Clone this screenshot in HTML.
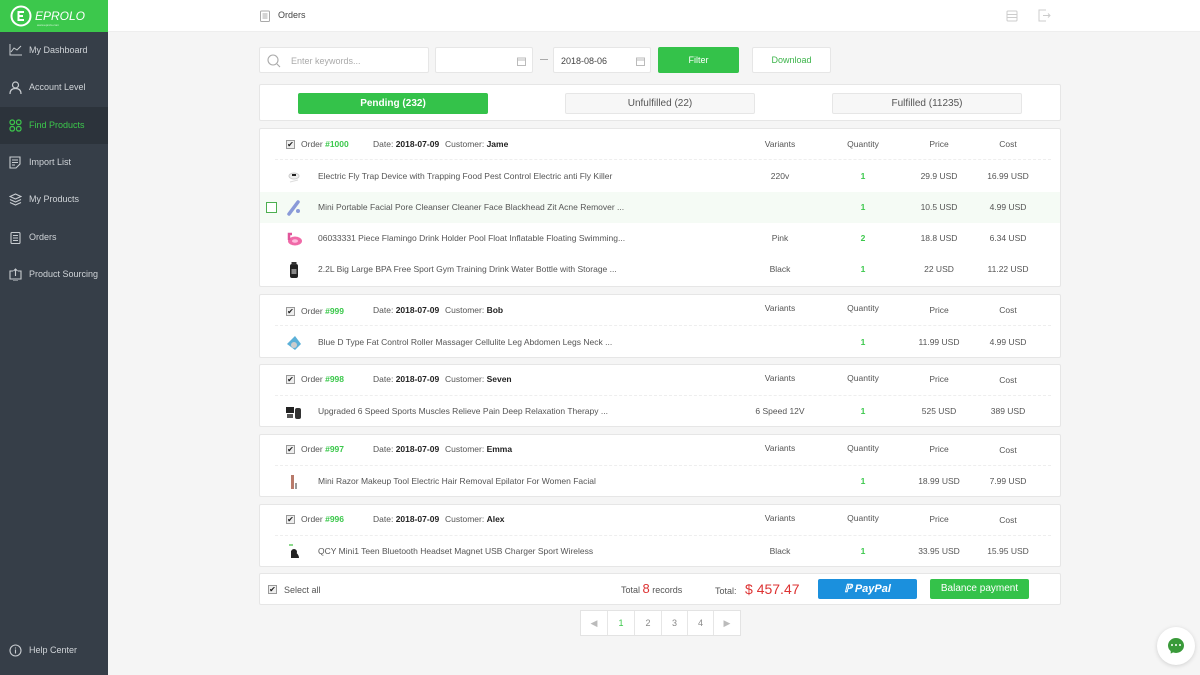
<!DOCTYPE html>
<html><head><meta charset="utf-8"><style>
*{box-sizing:border-box;margin:0;padding:0}
body{width:1200px;height:675px;overflow:hidden;background:#f5f5f5;font-family:"Liberation Sans",Arial,sans-serif;font-size:9px;color:#555;position:relative}
.abs{position:absolute}
#side{position:absolute;left:0;top:0;width:108px;height:675px;background:#363e48}
#logo{position:absolute;left:0;top:0;width:108px;height:32px;background:#3cc84c;color:#fff}
.nav{position:absolute;left:0;width:108px;height:37px;color:#d0d4d8;font-size:9px;line-height:37px;padding-left:29px}
.nav svg{position:absolute;left:9px;top:12px}
.nav.act{background:#2c333b;color:#3cc84c}
#top{position:absolute;left:108px;top:0;right:0;height:32px;background:#fff;border-bottom:1px solid #eee}
.box{position:absolute;background:#fff;border:1px solid #e6e6e6;border-radius:2px}
.btn{position:absolute;border-radius:2px;text-align:center;font-size:9px}
.blk{position:absolute;left:259px;width:802px;background:#fff;border:1px solid #e6e6e6;border-radius:2px}
.r{position:absolute;left:0;width:800px;height:31px;line-height:31px;font-size:8.5px}
.hd{border-bottom:1px dashed #eee}
.cb{position:absolute;width:9px;height:9px;border:1px solid #999;background:#eee;top:11px;left:26px;font-size:8px;line-height:7px;text-align:center;color:#222}
.c{position:absolute;text-align:center;width:80px}
.v{left:480px}.q{left:563px}.p{left:639px}.co{left:708px}
.g{color:#3cc84c;font-weight:bold}
.b{color:#222;font-weight:bold}
.t{position:absolute;left:58px;color:#555}
.th{position:absolute;left:25px;top:7px;width:18px;height:18px}
</style></head><body>
<div id="side">
<div id="logo">
<svg class="abs" style="left:10px;top:5px" width="22" height="22" viewBox="0 0 22 22"><circle cx="11" cy="11" r="9.5" fill="none" stroke="#fff" stroke-width="2"/><path d="M14 7H8.5v8H14M8.5 11H13" fill="none" stroke="#fff" stroke-width="2"/></svg>
<div class="abs" style="left:35px;top:9px;font-size:12px;font-style:italic">EPROLO</div>
<div class="abs" style="left:37px;top:23px;font-size:3px;opacity:.8">www.eprolo.com</div>
</div>
<div class="nav" style="top:32px"><svg width="13" height="12" viewBox="0 0 13 12" fill="none" stroke="#c8ccd0" stroke-width="1"><path d="M1 0v11h12M2 8l3-4 3 2 4-4"/></svg>My Dashboard</div>
<div class="nav" style="top:69px"><svg width="13" height="13" viewBox="0 0 13 13" fill="none" stroke="#c8ccd0" stroke-width="1.2"><circle cx="6.5" cy="4" r="3"/><path d="M1 13c0-4 2.5-5.5 5.5-5.5S12 9 12 13"/></svg>Account Level</div>
<div class="nav act" style="top:107px"><svg width="13" height="13" viewBox="0 0 13 13" fill="none" stroke="#3cc84c" stroke-width="1.2"><rect x="1" y="1" width="4.5" height="4.5" rx="2"/><rect x="7.5" y="1" width="4.5" height="4.5" rx="2"/><rect x="1" y="7.5" width="4.5" height="4.5" rx="2"/><rect x="7.5" y="7.5" width="4.5" height="4.5" rx="2"/></svg>Find Products</div>
<div class="nav" style="top:144px"><svg width="13" height="13" viewBox="0 0 13 13" fill="none" stroke="#c8ccd0" stroke-width="1.1"><path d="M1 1h10v7l-4 4H1zM3 4h6M3 6.5h6M3 9h3"/></svg>Import List</div>
<div class="nav" style="top:181px"><svg width="13" height="13" viewBox="0 0 13 13" fill="none" stroke="#c8ccd0" stroke-width="1.1"><path d="M6.5 1L12 3.5 6.5 6 1 3.5zM1 6.5L6.5 9 12 6.5M1 9.5L6.5 12 12 9.5"/></svg>My Products</div>
<div class="nav" style="top:219px"><svg width="13" height="13" viewBox="0 0 13 13" fill="none" stroke="#c8ccd0" stroke-width="1.1"><rect x="2" y="1.5" width="9" height="11" rx="1"/><path d="M4 4.5h5M4 7h5M4 9.5h5"/></svg>Orders</div>
<div class="nav" style="top:256px"><svg width="13" height="13" viewBox="0 0 13 13" fill="none" stroke="#c8ccd0" stroke-width="1.1"><path d="M4 3H1v8h11V3H9M6.5 8V1M4.5 3l2-2 2 2M4 13h5"/></svg>Product Sourcing</div>
<div class="nav" style="top:632px"><svg width="13" height="13" viewBox="0 0 13 13" fill="none" stroke="#c8ccd0" stroke-width="1.1"><circle cx="6.5" cy="6.5" r="5.5"/><path d="M6.5 5.5v4M6.5 3.5v1"/></svg>Help Center</div>
</div>
<div id="top">
<svg class="abs" style="left:152px;top:10px" width="10" height="12" viewBox="0 0 10 12" fill="none" stroke="#aaa" stroke-width="1"><rect x="0.5" y="1" width="9" height="10.5" rx="1"/><path d="M2.5 4h5M2.5 6h5M2.5 8h5"/></svg>
<div class="abs" style="left:170px;top:10px;font-size:9px;color:#444">Orders</div>
<svg class="abs" style="left:898px;top:10px" width="12" height="12" viewBox="0 0 12 12" fill="none" stroke="#ccc"><rect x="1" y="1" width="10" height="10" rx="1"/><path d="M1 4.5h10M1 7.5h10"/></svg>
<svg class="abs" style="left:930px;top:9px" width="13" height="13" viewBox="0 0 13 13" fill="none" stroke="#ccc"><path d="M8 1H1v11h7M5 6.5h7M10 4.5l2 2-2 2"/></svg>
</div>
<div class="box" style="left:259px;top:47px;width:170px;height:26px">
<svg class="abs" style="left:7px;top:6px" width="14" height="14" viewBox="0 0 14 14" fill="none" stroke="#aaa" stroke-width="1.1"><circle cx="6" cy="6" r="5"/><path d="M10 10l3 3"/></svg>
<div class="abs" style="left:31px;top:8px;color:#aaa">Enter keywords...</div></div>
<div class="box" style="left:435px;top:47px;width:98px;height:26px"><svg class="abs" style="left:81px;top:9px" width="9" height="9" viewBox="0 0 9 9" fill="none" stroke="#bbb"><rect x=".5" y="1" width="8" height="7.5"/><path d="M.5 3h8"/></svg></div>
<div class="abs" style="left:540px;top:59px;width:8px;height:1px;background:#aaa"></div>
<div class="box" style="left:553px;top:47px;width:98px;height:26px"><div class="abs" style="left:7px;top:8px;color:#444">2018-08-06</div><svg class="abs" style="left:82px;top:9px" width="9" height="9" viewBox="0 0 9 9" fill="none" stroke="#bbb"><rect x=".5" y="1" width="8" height="7.5"/><path d="M.5 3h8"/></svg></div>
<div class="btn" style="left:658px;top:47px;width:81px;height:26px;line-height:26px;background:#34c24a;color:#fff">Filter</div>
<div class="btn" style="left:752px;top:47px;width:79px;height:26px;line-height:24px;background:#fff;border:1px solid #e6e6e6;color:#3cb44a">Download</div>
<div class="box" style="left:259px;top:84px;width:802px;height:37px">
<div class="btn" style="left:38px;top:8px;width:190px;height:21px;line-height:21px;background:#34c24a;color:#fff;font-weight:bold;font-size:10px">Pending (232)</div>
<div class="btn" style="left:305px;top:8px;width:190px;height:21px;line-height:19px;background:#f7f7f7;border:1px solid #e6e6e6;color:#555;font-size:10px">Unfulfilled (22)</div>
<div class="btn" style="left:572px;top:8px;width:190px;height:21px;line-height:19px;background:#f7f7f7;border:1px solid #e6e6e6;color:#555;font-size:10px">Fulfilled (11235)</div>
</div>

<div class="blk" style="top:128px;height:159px">
<div class="r hd" style="top:0;left:15px;width:776px"><div class="cb" style="left:11px">✔</div><span class="abs" style="left:26px">Order <span class="g">#1000</span></span><span class="abs" style="left:98px">Date: <span class="b">2018-07-09</span></span><span class="abs" style="left:170px">Customer: <span class="b">Jame</span></span><span class="c v" style="left:465px">Variants</span><span class="c q" style="left:548px">Quantity</span><span class="c p" style="left:624px">Price</span><span class="c co" style="left:693px">Cost</span></div>
<div class="r" style="top:32px"><svg class="th" viewBox="0 0 18 18"><ellipse cx="9" cy="8" rx="5" ry="3" fill="#eee" stroke="#ccc"/><path d="M7 7h4" stroke="#222" stroke-width="2"/><path d="M5 14l8-2" stroke="#ddd"/></svg><span class="t">Electric Fly Trap Device with Trapping Food Pest Control Electric anti Fly Killer</span><span class="c v">220v</span><span class="c q g">1</span><span class="c p">29.9 USD</span><span class="c co">16.99 USD</span></div>
<div class="r" style="top:63px;background:#f5fbf5;width:800px"><div class="abs" style="left:6px;top:10px;width:11px;height:11px;border:1px solid #4caf50;background:#fff"></div><svg class="th" viewBox="0 0 18 18"><path d="M4 15L13 3" stroke="#8a9ad8" stroke-width="3.5" stroke-linecap="round"/><circle cx="13" cy="12" r="2" fill="#8a9ad8"/></svg><span class="t">Mini Portable Facial Pore Cleanser Cleaner Face Blackhead Zit Acne Remover ...</span><span class="c q g">1</span><span class="c p">10.5 USD</span><span class="c co">4.99 USD</span></div>
<div class="r" style="top:94px"><svg class="th" viewBox="0 0 18 18"><ellipse cx="10" cy="11" rx="7" ry="4.5" fill="#f06aa8"/><ellipse cx="10" cy="11" rx="3" ry="1.8" fill="#fbd"/><path d="M4 10V4h3" stroke="#e0559a" stroke-width="2.5" fill="none"/></svg><span class="t">06033331 Piece Flamingo Drink Holder Pool Float Inflatable Floating Swimming...</span><span class="c v">Pink</span><span class="c q g">2</span><span class="c p">18.8 USD</span><span class="c co">6.34 USD</span></div>
<div class="r" style="top:125px"><svg class="th" viewBox="0 0 18 18"><rect x="5" y="3" width="8" height="14" rx="2" fill="#222"/><rect x="6.5" y="1" width="5" height="3" fill="#333"/><rect x="6.5" y="8" width="5" height="5" fill="#888"/></svg><span class="t">2.2L Big Large BPA Free Sport Gym Training Drink Water Bottle with Storage ...</span><span class="c v">Black</span><span class="c q g">1</span><span class="c p">22 USD</span><span class="c co">11.22 USD</span></div>
</div>

<div class="blk" style="top:294px;height:64px">
<div class="r hd" style="top:0;left:15px;width:776px"><div class="cb" style="left:11px;top:12px">✔</div><span class="abs" style="left:26px;top:1px">Order <span class="g">#999</span></span><span class="abs" style="left:98px">Date: <span class="b">2018-07-09</span></span><span class="abs" style="left:170px">Customer: <span class="b">Bob</span></span><span class="c v" style="left:465px;top:-2px">Variants</span><span class="c q" style="left:548px;top:-2px">Quantity</span><span class="c p" style="left:624px">Price</span><span class="c co" style="left:693px">Cost</span></div>
<div class="r" style="top:32px"><svg class="th" viewBox="0 0 18 18"><path d="M2 10l8-8 6 8-6 6z" fill="#5bb0d8"/><circle cx="9" cy="11" r="3" fill="#ccc"/></svg><span class="t">Blue D Type Fat Control Roller Massager Cellulite Leg Abdomen Legs Neck ...</span><span class="c q g">1</span><span class="c p">11.99 USD</span><span class="c co">4.99 USD</span></div>
</div>

<div class="blk" style="top:364px;height:63px">
<div class="r hd" style="top:0;left:15px;width:776px"><div class="cb" style="left:11px;top:10px">✔</div><span class="abs" style="left:26px;top:-1px">Order <span class="g">#998</span></span><span class="abs" style="left:98px;top:-1px">Date: <span class="b">2018-07-09</span></span><span class="abs" style="left:170px;top:-1px">Customer: <span class="b">Seven</span></span><span class="c v" style="left:465px;top:-2px">Variants</span><span class="c q" style="left:548px;top:-2px">Quantity</span><span class="c p" style="left:624px;top:-1px">Price</span><span class="c co" style="left:693px">Cost</span></div>
<div class="r" style="top:31px"><svg class="th" viewBox="0 0 18 18"><rect x="1" y="4" width="8" height="6" fill="#222"/><rect x="10" y="5" width="6" height="11" rx="2" fill="#333"/><rect x="2" y="11" width="6" height="4" fill="#555"/></svg><span class="t">Upgraded 6 Speed Sports Muscles Relieve Pain Deep Relaxation Therapy ...</span><span class="c v">6 Speed 12V</span><span class="c q g">1</span><span class="c p">525 USD</span><span class="c co">389 USD</span></div>
</div>

<div class="blk" style="top:434px;height:63px">
<div class="r hd" style="top:0;left:15px;width:776px"><div class="cb" style="left:11px;top:10px">✔</div><span class="abs" style="left:26px;top:-1px">Order <span class="g">#997</span></span><span class="abs" style="left:98px;top:-1px">Date: <span class="b">2018-07-09</span></span><span class="abs" style="left:170px;top:-1px">Customer: <span class="b">Emma</span></span><span class="c v" style="left:465px;top:-2px">Variants</span><span class="c q" style="left:548px;top:-2px">Quantity</span><span class="c p" style="left:624px;top:-1px">Price</span><span class="c co" style="left:693px">Cost</span></div>
<div class="r" style="top:31px"><svg class="th" viewBox="0 0 18 18"><rect x="6" y="2" width="3" height="14" fill="#b87a6a"/><rect x="10" y="10" width="2" height="6" fill="#999"/></svg><span class="t">Mini Razor Makeup Tool Electric Hair Removal Epilator For Women Facial</span><span class="c q g">1</span><span class="c p">18.99 USD</span><span class="c co">7.99 USD</span></div>
</div>

<div class="blk" style="top:504px;height:63px">
<div class="r hd" style="top:0;left:15px;width:776px"><div class="cb" style="left:11px;top:10px">✔</div><span class="abs" style="left:26px;top:-1px">Order <span class="g">#996</span></span><span class="abs" style="left:98px;top:-1px">Date: <span class="b">2018-07-09</span></span><span class="abs" style="left:170px;top:-1px">Customer: <span class="b">Alex</span></span><span class="c v" style="left:465px;top:-2px">Variants</span><span class="c q" style="left:548px;top:-2px">Quantity</span><span class="c p" style="left:624px;top:-1px">Price</span><span class="c co" style="left:693px">Cost</span></div>
<div class="r" style="top:31px"><svg class="th" viewBox="0 0 18 18"><path d="M4 2h4" stroke="#6c6" stroke-width="1.5"/><path d="M6 8c4 0 8 3 8 7H6z" fill="#222"/><circle cx="9" cy="9" r="3" fill="#222"/></svg><span class="t">QCY Mini1 Teen Bluetooth Headset Magnet USB Charger Sport Wireless</span><span class="c v">Black</span><span class="c q g">1</span><span class="c p">33.95 USD</span><span class="c co">15.95 USD</span></div>
</div>

<div class="blk" style="top:573px;height:32px">
<div class="cb" style="left:8px;top:11px">✔</div>
<div class="abs" style="left:24px;top:11px">Select all</div>
<div class="abs" style="left:361px;top:0;height:30px;line-height:30px">Total <span style="color:#d33;font-size:13px">8</span> records</div>
<div class="abs" style="left:455px;top:0;height:30px;line-height:30px">Total: <span style="color:#d33;font-size:14px;margin-left:6px">$ 457.47</span></div>
<div class="btn" style="left:558px;top:5px;width:99px;height:20px;line-height:20px;background:#1b90dd;color:#fff;font-style:italic;font-weight:bold;font-size:11px">&#x2119; PayPal</div>
<div class="btn" style="left:670px;top:5px;width:99px;height:20px;line-height:19px;background:#34c24a;color:#fff;font-size:10px">Balance payment</div>
</div>

<div class="abs" style="left:580px;top:610px;width:161px;height:26px;background:#fff;border:1px solid #e3e3e3;display:flex">
<div style="width:27px;text-align:center;line-height:24px;color:#bbb;border-right:1px solid #e6e6e6">◀</div>
<div style="width:27px;text-align:center;line-height:24px;color:#3cc84c;border-right:1px solid #e6e6e6">1</div>
<div style="width:27px;text-align:center;line-height:24px;color:#888;border-right:1px solid #e6e6e6">2</div>
<div style="width:26px;text-align:center;line-height:24px;color:#888;border-right:1px solid #e6e6e6">3</div>
<div style="width:26px;text-align:center;line-height:24px;color:#888;border-right:1px solid #e6e6e6">4</div>
<div style="width:26px;text-align:center;line-height:24px;color:#bbb">▶</div>
</div>

<div class="abs" style="left:1157px;top:627px;width:38px;height:38px;border-radius:50%;background:#fff;box-shadow:0 1px 5px rgba(0,0,0,.15)">
<div class="abs" style="left:11px;top:11px;width:16px;height:15px;border-radius:50%;background:#3a9a3a"></div>
<div class="abs" style="left:12px;top:22px;width:0;height:0;border-left:3px solid transparent;border-right:3px solid transparent;border-top:5px solid #3a9a3a;transform:rotate(30deg)"></div>
<div class="abs" style="left:14px;top:17px;width:10px;height:3px;display:flex;justify-content:space-between"><i style="width:2px;height:2px;background:#fff;border-radius:50%"></i><i style="width:2px;height:2px;background:#fff;border-radius:50%"></i><i style="width:2px;height:2px;background:#fff;border-radius:50%"></i></div>
</div>
</body></html>
